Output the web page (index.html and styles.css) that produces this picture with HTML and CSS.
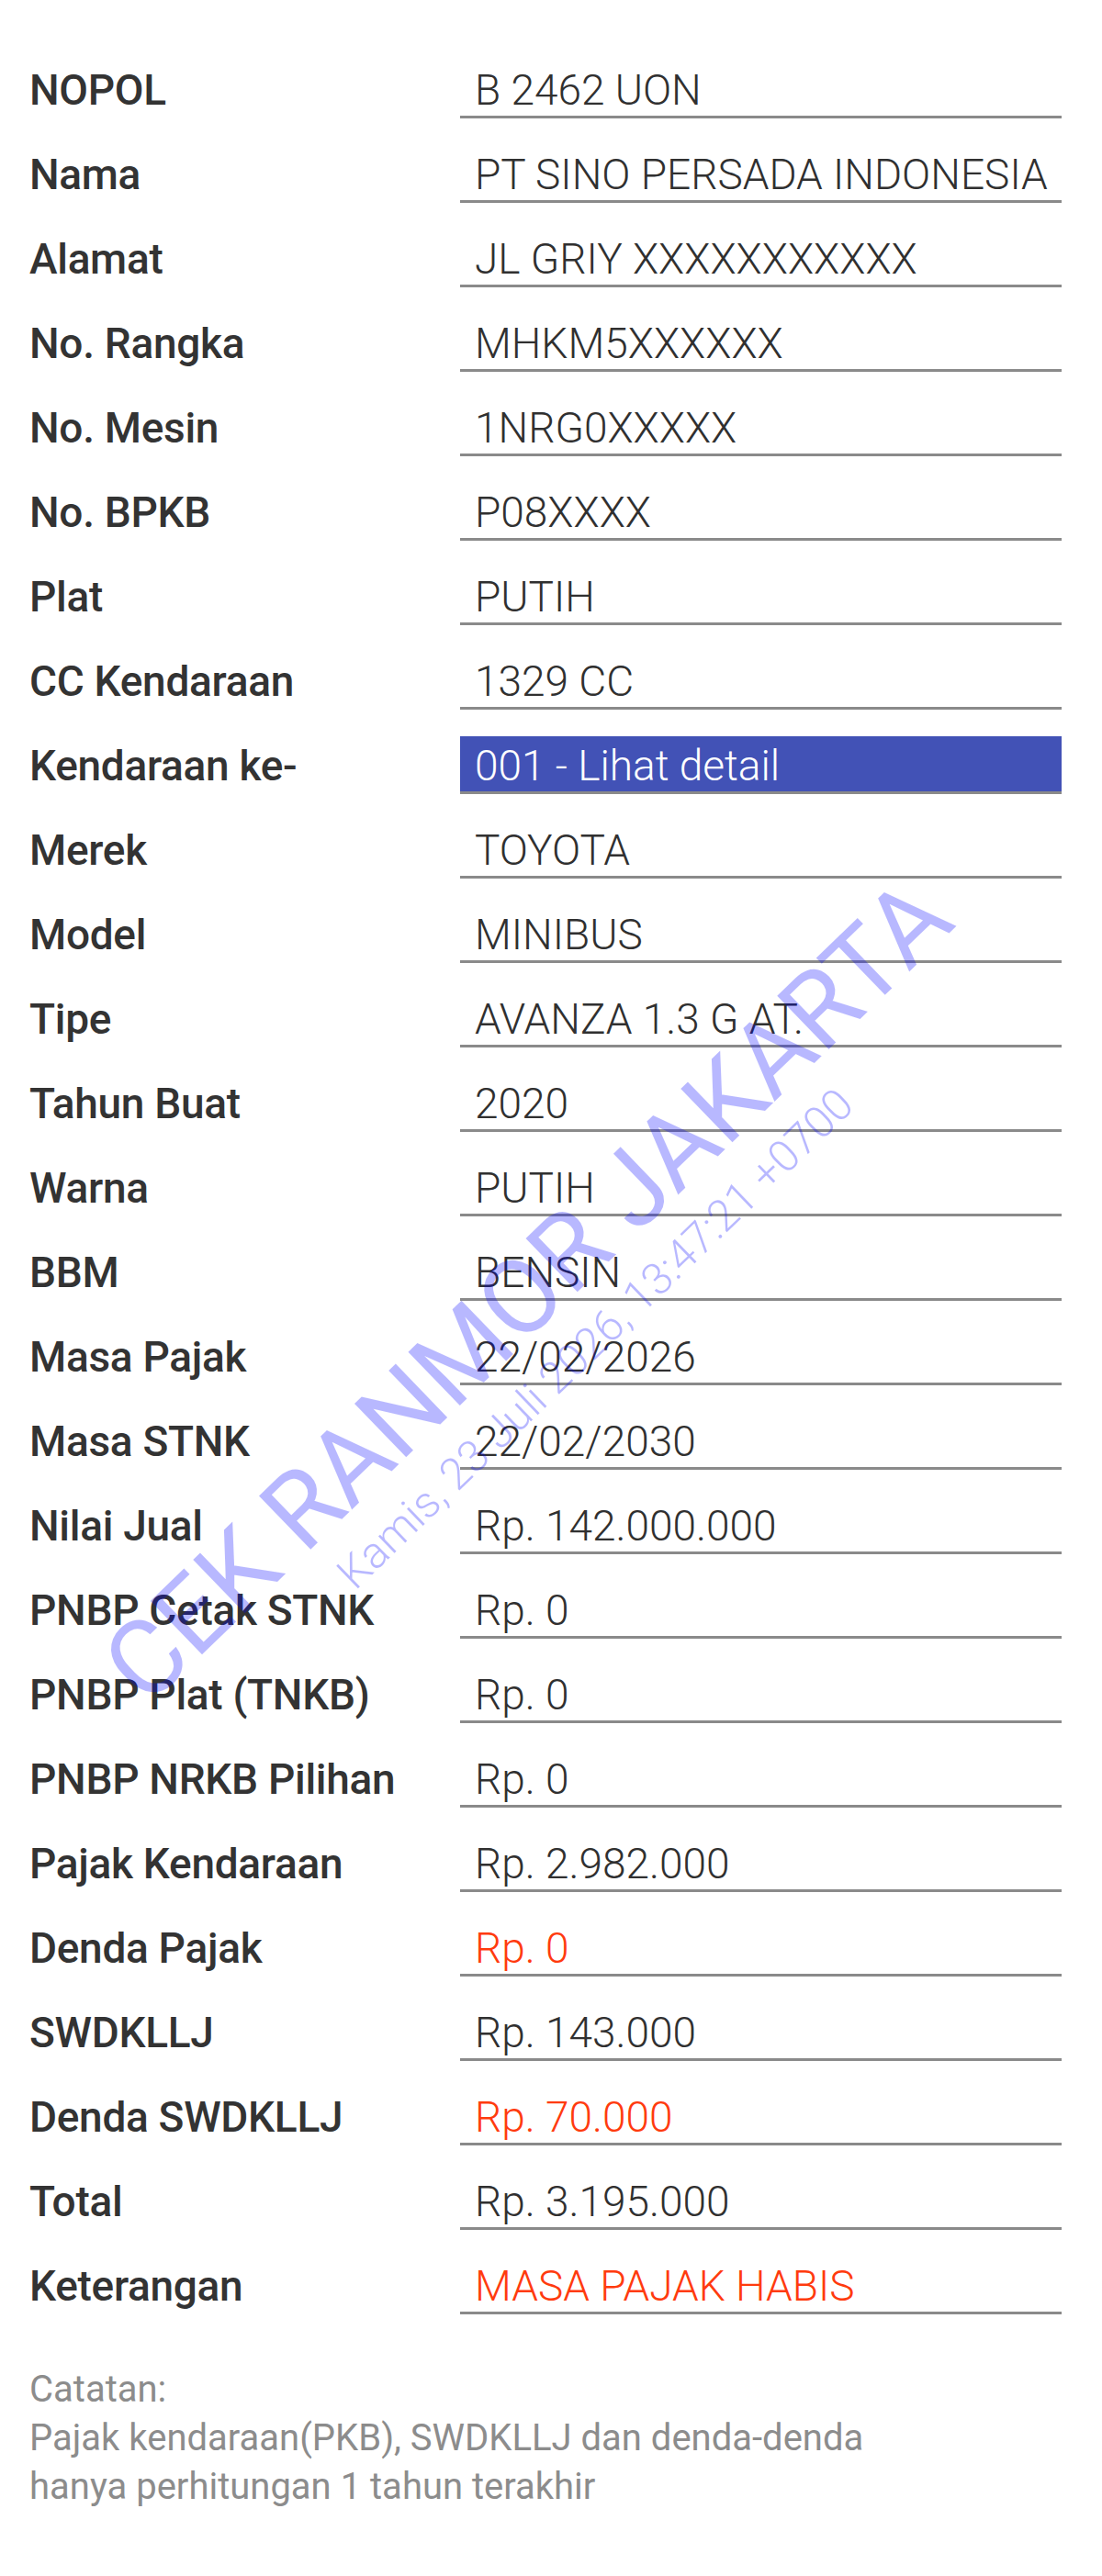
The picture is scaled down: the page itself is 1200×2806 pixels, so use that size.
FILE: index.html
```html
<!DOCTYPE html>
<html lang="id">
<head>
<meta charset="utf-8">
<title>Info Kendaraan</title>
<link rel="stylesheet" href="styles.css">
</head>
<body>
<main class="page">
  <section class="list">
    <div class="row"><div class="label">NOPOL</div><div class="value">B 2462 UON</div></div>
    <div class="row"><div class="label">Nama</div><div class="value">PT SINO PERSADA INDONESIA</div></div>
    <div class="row"><div class="label">Alamat</div><div class="value">JL GRIY XXXXXXXXXXX</div></div>
    <div class="row"><div class="label">No. Rangka</div><div class="value">MHKM5XXXXXX</div></div>
    <div class="row"><div class="label">No. Mesin</div><div class="value">1NRG0XXXXX</div></div>
    <div class="row"><div class="label">No. BPKB</div><div class="value">P08XXXX</div></div>
    <div class="row"><div class="label">Plat</div><div class="value">PUTIH</div></div>
    <div class="row"><div class="label">CC Kendaraan</div><div class="value">1329 CC</div></div>
    <div class="row"><div class="label">Kendaraan ke-</div><div class="value link">001 - Lihat detail</div></div>
    <div class="row"><div class="label">Merek</div><div class="value">TOYOTA</div></div>
    <div class="row"><div class="label">Model</div><div class="value">MINIBUS</div></div>
    <div class="row"><div class="label">Tipe</div><div class="value">AVANZA 1.3 G AT.</div></div>
    <div class="row"><div class="label">Tahun Buat</div><div class="value">2020</div></div>
    <div class="row"><div class="label">Warna</div><div class="value">PUTIH</div></div>
    <div class="row"><div class="label">BBM</div><div class="value">BENSIN</div></div>
    <div class="row"><div class="label">Masa Pajak</div><div class="value">22/02/2026</div></div>
    <div class="row"><div class="label">Masa STNK</div><div class="value">22/02/2030</div></div>
    <div class="row"><div class="label">Nilai Jual</div><div class="value">Rp. 142.000.000</div></div>
    <div class="row"><div class="label">PNBP Cetak STNK</div><div class="value">Rp. 0</div></div>
    <div class="row"><div class="label">PNBP Plat (TNKB)</div><div class="value">Rp. 0</div></div>
    <div class="row"><div class="label">PNBP NRKB Pilihan</div><div class="value">Rp. 0</div></div>
    <div class="row"><div class="label">Pajak Kendaraan</div><div class="value">Rp. 2.982.000</div></div>
    <div class="row"><div class="label">Denda Pajak</div><div class="value red">Rp. 0</div></div>
    <div class="row"><div class="label">SWDKLLJ</div><div class="value">Rp. 143.000</div></div>
    <div class="row"><div class="label">Denda SWDKLLJ</div><div class="value red">Rp. 70.000</div></div>
    <div class="row"><div class="label">Total</div><div class="value">Rp. 3.195.000</div></div>
    <div class="row"><div class="label">Keterangan</div><div class="value red">MASA PAJAK HABIS</div></div>
  </section>
  <section class="note">
    <p>Catatan:</p>
    <p>Pajak kendaraan(PKB), SWDKLLJ dan denda-denda</p>
    <p>hanya perhitungan 1 tahun terakhir</p>
  </section>
  <div class="wm wm-big">CEK RANMOR JAKARTA</div>
  <div class="wm wm-small">Kamis, 23 Juli 2026, 13:47:21 +0700</div>
</main>
</body>
</html>
```

FILE: styles.css
```css
html, body {
  margin: 0;
  padding: 0;
  background: #ffffff;
}

.page {
  position: relative;
  min-height: 2806px;
  overflow: hidden;
  font-family: Roboto, "Noto Sans", sans-serif;
  color: #333333;
}

.list {
  display: flex;
  flex-direction: column;
  gap: 29px;
  padding: 66px 44px 0 32px;
}

.row {
  display: grid;
  grid-template-columns: 469px 1fr;
  height: 63px;
}

.label {
  font-size: 46px;
  font-weight: 500;
  line-height: 64px;
  height: 60px;
  color: #333333;
  white-space: nowrap;
  letter-spacing: -0.3px;
}

.value {
  font-size: 46px;
  font-weight: 300;
  line-height: 64px;
  height: 60px;
  padding-left: 16px;
  border-bottom: 3px solid #8a8a8a;
  color: #303030;
  white-space: nowrap;
}

.value.link {
  background: #4252b6;
  color: #ffffff;
}

.value.red {
  color: #ff3b0e;
}

.note {
  padding: 55px 32px 0 32px;
  color: #8c8c8c;
  font-family: Roboto, "Noto Sans", sans-serif;
  font-weight: 400;
  font-size: 40px;
  line-height: 53px;
}

.note p {
  margin: 0;
}

.wm {
  position: absolute;
  white-space: nowrap;
  color: rgba(0, 0, 255, 0.28);
  pointer-events: none;
  transform: translate(-50%, -50%) rotate(-44deg);
  font-family: Roboto, sans-serif;
}

.wm-big {
  left: 574px;
  top: 1406px;
  font-size: 114px;
  font-weight: 400;
}

.wm-small {
  left: 648px;
  top: 1458px;
  font-size: 48px;
  font-weight: 300;
}
```
